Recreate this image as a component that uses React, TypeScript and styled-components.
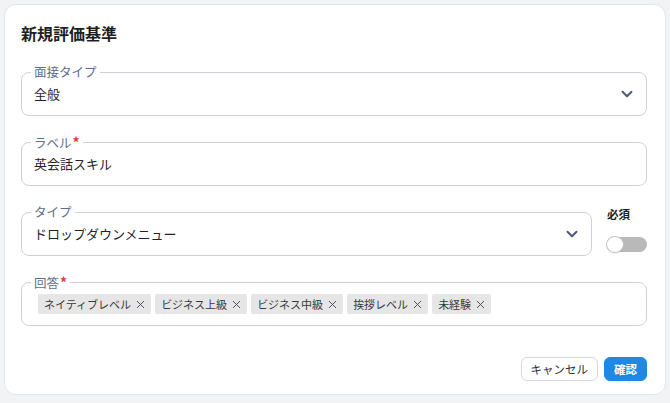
import React, { useState } from 'react';
import styled, { createGlobalStyle } from 'styled-components';
import { ChevronDown, X } from 'lucide-react';

const GlobalStyle = createGlobalStyle`
  html, body {
    margin: 0;
    padding: 0;
    background: #f2f3f5;
  }
  body {
    font-family: "Noto Sans CJK JP", "Noto Sans", sans-serif;
    color: #1f2329;
  }
  * {
    box-sizing: border-box;
  }
`;

const Card = styled.div`
  margin: 4px;
  width: 662px;
  height: 391px;
  background: #ffffff;
  border: 1px solid #e3e6ea;
  border-radius: 12px;
  padding: 17px 18px 13px 16px;
  display: flex;
  flex-direction: column;
`;

const Title = styled.h2`
  margin: 0 0 20px;
  font-size: 16px;
  line-height: 22px;
  font-weight: 700;
  color: #1c1f24;
`;

const Form = styled.div`
  display: flex;
  flex-direction: column;
  gap: 18px;
`;

const Row = styled.div`
  display: flex;
  align-items: flex-start;
  gap: 15px;
`;

const Field = styled.fieldset`
  margin: 0;
  min-width: 0;
  flex: 1;
  border: 1px solid #cdd2d9;
  border-radius: 8px;
  padding: 4px 0 11px;
`;

const Legend = styled.legend`
  margin-left: 9px;
  padding: 0 3px;
  height: 16px;
  font-size: 12.5px;
  line-height: 16px;
  color: #5d6e8c;
`;

const Required = styled.span`
  color: #e53935;
  margin-left: 1px;
  font-size: 14px;
  font-weight: 700;
`;

const ValueRow = styled.div`
  display: flex;
  align-items: center;
  justify-content: space-between;
  height: 20px;
  padding: 0 10px 0 12px;
  font-size: 13px;
  line-height: 20px;
  color: #1f2329;
`;

const Chevron = styled(ChevronDown)`
  color: #4a5a78;
  flex-shrink: 0;
`;

const ChipList = styled.div`
  display: flex;
  gap: 4px;
  padding: 0 12px 0 16px;
`;

const Chip = styled.span`
  display: inline-flex;
  align-items: center;
  gap: 3px;
  height: 20px;
  padding: 0 4px 0 6px;
  background: #e6e6e6;
  border-radius: 2px;
  font-size: 11px;
  color: #333840;
`;

const ChipClose = styled(X)`
  color: #4a4f57;
`;

const SwitchColumn = styled.div`
  width: 40px;
  padding-top: 2px;
  display: flex;
  flex-direction: column;
  gap: 15px;
`;

const SwitchLabel = styled.span`
  font-size: 11.5px;
  line-height: 16px;
  font-weight: 700;
  color: #1c1f24;
  white-space: nowrap;
`;

const SwitchTrack = styled.button<{ $on: boolean }>`
  position: relative;
  width: 40px;
  height: 15px;
  padding: 0;
  border: none;
  border-radius: 8px;
  background: ${p => (p.$on ? '#1e88e5' : '#b9b9b9')};
  cursor: pointer;
`;

const SwitchThumb = styled.span<{ $on: boolean }>`
  position: absolute;
  top: 0;
  left: ${p => (p.$on ? '24px' : '0')};
  width: 16px;
  height: 15px;
  border-radius: 50%;
  background: #ffffff;
  box-shadow: 0 0 0 1px #c4c4c4, 0 1px 2px rgba(0, 0, 0, 0.2);
`;

const Footer = styled.div`
  margin-top: auto;
  display: flex;
  justify-content: flex-end;
  gap: 6px;
`;

const Button = styled.button<{ $primary?: boolean }>`
  height: 24px;
  padding: 0 9px;
  border-radius: 6px;
  font-family: inherit;
  font-size: 11.5px;
  cursor: pointer;
  border: 1px solid ${p => (p.$primary ? '#1e88e5' : '#d3d8df')};
  background: ${p => (p.$primary ? '#1e88e5' : '#ffffff')};
  color: ${p => (p.$primary ? '#ffffff' : '#2a2f36')};
  font-weight: ${p => (p.$primary ? 700 : 400)};
`;

const answers = ['ネイティブレベル', 'ビジネス上級', 'ビジネス中級', '挨拶レベル', '未経験'];

export default function App() {
  const [required, setRequired] = useState(false);

  return (
    <>
      <GlobalStyle />
      <Card>
        <Title>新規評価基準</Title>
        <Form>
          <Field>
            <Legend>面接タイプ</Legend>
            <ValueRow>
              <span>全般</span>
              <Chevron size={18} strokeWidth={2.6} />
            </ValueRow>
          </Field>

          <Field>
            <Legend>
              ラベル<Required>*</Required>
            </Legend>
            <ValueRow>
              <span>英会話スキル</span>
            </ValueRow>
          </Field>

          <Row>
            <Field>
              <Legend>タイプ</Legend>
              <ValueRow>
                <span>ドロップダウンメニュー</span>
                <Chevron size={18} strokeWidth={2.6} />
              </ValueRow>
            </Field>
            <SwitchColumn>
              <SwitchLabel>必須</SwitchLabel>
              <SwitchTrack $on={required} onClick={() => setRequired(!required)}>
                <SwitchThumb $on={required} />
              </SwitchTrack>
            </SwitchColumn>
          </Row>

          <Field>
            <Legend>
              回答<Required>*</Required>
            </Legend>
            <ChipList>
              {answers.map(a => (
                <Chip key={a}>
                  {a}
                  <ChipClose size={13} strokeWidth={1.8} />
                </Chip>
              ))}
            </ChipList>
          </Field>
        </Form>

        <Footer>
          <Button>キャンセル</Button>
          <Button $primary>確認</Button>
        </Footer>
      </Card>
    </>
  );
}
